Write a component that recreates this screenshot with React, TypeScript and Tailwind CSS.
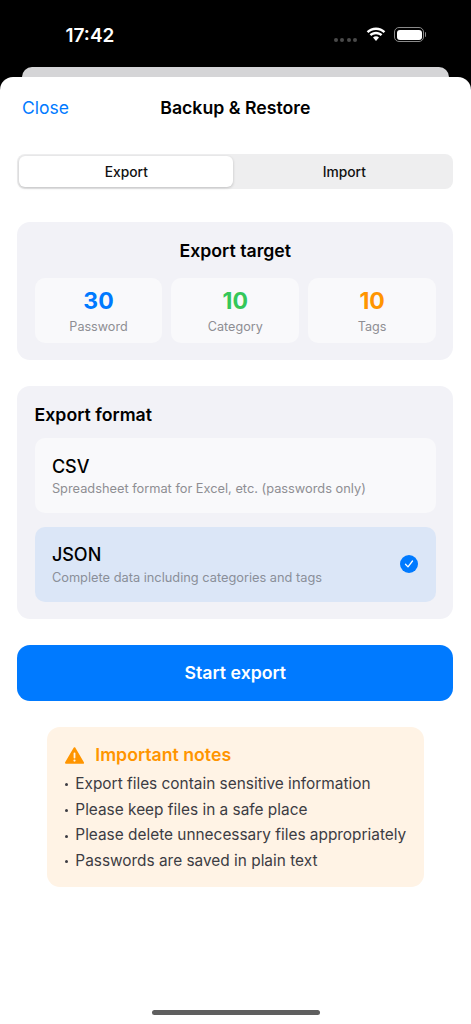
import React from "react";

const font = { fontFamily: "Inter, 'Liberation Sans', sans-serif" };

function Stat({ value, label, color }: { value: string; label: string; color: string }) {
  return (
    <div className="h-[65px] rounded-[10px] bg-[#f9f9fb] flex flex-col items-center pt-[9px]">
      <div className={`text-[23px] leading-[29px] font-bold ${color}`}>{value}</div>
      <div className="text-[12.6px] leading-[17px] mt-[2px] text-[#8e8e93]">{label}</div>
    </div>
  );
}

function Note({ children }: { children: string }) {
  return (
    <div className="flex items-center whitespace-nowrap">
      <span className="shrink-0 w-[3px] h-[3px] rounded-full bg-[#3c3c43] mr-[7px] mt-[2px]" />
      <span>{children}</span>
    </div>
  );
}

export default function App() {
  return (
    <div className="w-[471px] h-[1024px] bg-black overflow-hidden flex flex-col" style={font}>
      <div className="h-[67px] shrink-0 flex items-start justify-between pl-[65.500px] pr-[45px] pt-[24px]">
        <span className="text-white text-[19px] leading-[24px] font-semibold">17:42</span>
        <div className="flex items-center pt-[3px]">
          <div className="flex gap-[2.300px] mt-[11px] mr-[9px]">
            <i className="w-[4px] h-[4px] rounded-full bg-[#4a4a4a]" />
            <i className="w-[4px] h-[4px] rounded-full bg-[#4a4a4a]" />
            <i className="w-[4px] h-[4px] rounded-full bg-[#4a4a4a]" />
            <i className="w-[4px] h-[4px] rounded-full bg-[#4a4a4a]" />
          </div>
          <svg width="20" height="15" viewBox="0 0 20 15" fill="white">
            <path d="M10 3C13 3 15.6 4.2 17.6 6.1L19.3 4.3C16.8 1.9 13.6.5 10 .5S3.200 1.900.7 4.300L2.400 6.100C4.400 4.200 7 3 10 3Z" />
            <path d="M10 7.200C11.800 7.200 13.400 7.900 14.700 9L16.400 7.200C14.700 5.700 12.500 4.800 10 4.800S5.300 5.700 3.600 7.200L5.300 9C6.600 7.900 8.200 7.200 10 7.200Z" />
            <path d="M10 9.300C8.900 9.300 7.800 9.700 7 10.500L10 14L13 10.500C12.200 9.700 11.100 9.300 10 9.300Z" />
          </svg>
          <div className="flex items-center ml-[8px]">
            <div className="w-[30px] h-[15px] rounded-[5px] border border-[#8a8a8a] p-[1.5px]">
              <div className="w-full h-full rounded-[3px] bg-white" />
            </div>
            <div className="w-[1.500px] h-[5px] ml-[0.500px] rounded-r bg-[#8a8a8a]" />
          </div>
        </div>
      </div>
      <div className="h-[10px] shrink-0 mx-[22px] rounded-t-[10px] bg-[#d5d5d7]" />
      <div className="flex-1 relative bg-white rounded-t-[13px] pl-[17.300px] pr-[17.700px] flex flex-col">
        <div className="relative h-[62px] shrink-0 flex items-center justify-center">
          <span className="absolute left-[4.700px] text-[17.500px] text-[#007aff]">Close</span>
          <span className="text-[17.700px] font-semibold text-black">Backup &amp; Restore</span>
        </div>
        <div className="mt-[15px] h-[35px] rounded-[8px] bg-[#eeeeef] p-[2px] pt-[3px] grid grid-cols-2 gap-[4px] text-[13.800px] font-medium text-[#111]">
          <div className="-mt-[1px] bg-white rounded-[6px] shadow-[0_1px_3px_rgba(0,0,0,0.2)] flex items-center justify-center pt-[1px]">Export</div>
          <div className="flex items-center justify-center">Import</div>
        </div>
        <div className="mt-[33px] h-[138px] rounded-[13px] bg-[#f2f2f7] px-[17.300px] pt-[17px]">
          <div className="text-[17.700px] leading-[24px] font-semibold text-center text-black">Export target</div>
          <div className="mt-[15px] grid grid-cols-3 gap-[9px]">
            <Stat value="30" label="Password" color="text-[#007aff]" />
            <Stat value="10" label="Category" color="text-[#34c759]" />
            <Stat value="10" label="Tags" color="text-[#ff9500]" />
          </div>
        </div>
        <div className="mt-[26px] h-[233px] rounded-[13px] bg-[#f2f2f7] px-[17.300px] pt-[17.500px]">
          <div className="text-[17.700px] leading-[22px] font-semibold text-black">Export format</div>
          <div className="mt-[12.500px] h-[75px] rounded-[10px] bg-[#f9f9fb] px-[17.300px] pt-[17px]">
            <div className="text-[18px] leading-[24px] font-medium text-black">CSV</div>
            <div className="text-[12.800px] leading-[16px] mt-[2px] text-[#8e8e93]">Spreadsheet format for Excel, etc. (passwords only)</div>
          </div>
          <div className="mt-[13.500px] h-[75px] rounded-[10px] bg-[#dbe6f7] px-[17.300px] pt-[16px] flex items-center justify-between">
            <div className="self-start">
              <div className="text-[18px] leading-[24px] font-medium text-black">JSON</div>
              <div className="text-[12.800px] leading-[16px] mt-[3px] text-[#8a8f99]">Complete data including categories and tags</div>
            </div>
            <svg className="-mt-[16px] mr-[1px]" width="18" height="18" viewBox="0 0 18 18">
              <circle cx="9" cy="9" r="9" fill="#007aff" />
              <path d="M5.500 9.300L8 11.900L12.500 6" fill="none" stroke="white" strokeWidth="1.300" strokeLinecap="round" strokeLinejoin="round" />
            </svg>
          </div>
        </div>
        <div className="mt-[26px] h-[56px] rounded-[13px] bg-[#007aff] flex items-center justify-center text-white text-[17.700px] font-semibold">Start export</div>
        <div className="mt-[26px] ml-[30px] mr-[29.300px] h-[160px] rounded-[13px] bg-[#fff3e5] px-[18px] pt-[16px]">
          <div className="flex items-center gap-[11px]">
            <svg width="19" height="17" viewBox="0 0 19 17">
              <path d="M9.500 1.200L18 15.800H1Z" fill="#ff9500" stroke="#ff9500" strokeWidth="2" strokeLinejoin="round" />
              <rect x="8.600" y="5.500" width="1.800" height="6" rx="0.900" fill="#fff3e5" />
              <circle cx="9.500" cy="13.600" r="1.100" fill="#fff3e5" />
            </svg>
            <span className="text-[17.700px] leading-[24px] font-semibold text-[#ff9500]">Important notes</span>
          </div>
          <div className="mt-[4px] text-[15.400px] leading-[25.700px] text-[#3c3c43]">
            <Note>Export files contain sensitive information</Note>
            <Note>Please keep files in a safe place</Note>
            <Note>Please delete unnecessary files appropriately</Note>
            <Note>Passwords are saved in plain text</Note>
          </div>
        </div>
        <div className="absolute bottom-[9px] left-[152px] w-[168px] h-[5px] rounded-full bg-[#5f5f5f]" />
      </div>
    </div>
  );
}
